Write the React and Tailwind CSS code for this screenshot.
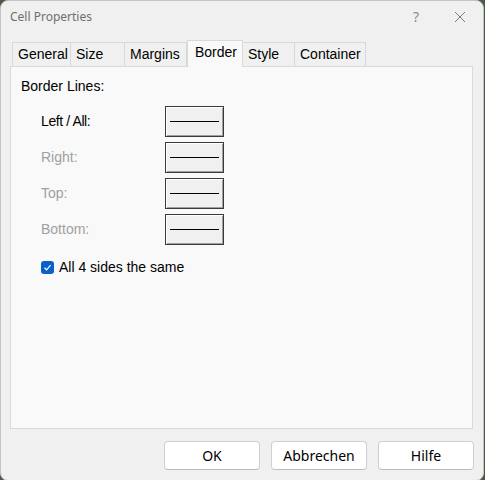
import React from 'react';

const tabs = [
  { label: 'General', w: 59 },
  { label: 'Size', w: 54 },
  { label: 'Margins', w: 62 },
  { label: 'Border', w: 56, active: true },
  { label: 'Style', w: 52 },
  { label: 'Container', w: 71 },
];

const rows = [
  { label: 'Left / All:', enabled: true },
  { label: 'Right:' },
  { label: 'Top:' },
  { label: 'Bottom:' },
];

const sans = { fontFamily: '"Liberation Sans", sans-serif' };

function LineButton() {
  return (
    <div className="h-[31px] w-[59px] border border-[#3a3a3a] bg-[#f0f0f0] shadow-[inset_1px_1px_0_#ffffff,inset_-1px_-1px_0_#a0a0a0] flex items-center justify-center">
      <div className="h-px w-[49px] bg-black" />
    </div>
  );
}

export default function App() {
  return (
    <div className="w-[485px] h-[480px] bg-[#4c5a44] overflow-hidden" style={{ fontFamily: '"Noto Sans", "Liberation Sans", sans-serif' }}>
      <div className="w-[484px] h-[481px] rounded-[8px] bg-[#f0f0f0] border border-[#c4c4c4] flex flex-col">
        {/* title bar */}
        <div className="h-[31px] flex items-center pl-[9px] text-[12px] text-[#6e6e6e]">
          <span className="flex-1">Cell Properties</span>
          <span className="w-[20px] text-center text-[14px] text-[#8a8a8a] mr-[28px]">?</span>
          <svg width="12" height="12" viewBox="0 0 12 12" className="mr-[17px]">
            <path d="M1 1L11 11M11 1L1 11" stroke="#7a7a7a" strokeWidth="1" />
          </svg>
        </div>

        {/* tabs */}
        <div className="pl-[11px] mt-[9px] flex items-end h-[25px] relative z-10" style={sans}>
          {tabs.map((t) =>
            t.active ? (
              <div
                key={t.label}
                style={{ width: t.w }}
                className="h-[27px] -mb-px bg-[#f9f9f9] border border-b-0 border-[#d9d9d9] pl-[7px] pt-[1px] text-[14px] text-black"
              >
                {t.label}
              </div>
            ) : (
              <div
                key={t.label}
                style={{ width: t.w }}
                className="h-[24px] bg-[#f0f0f0] border border-b-0 border-l-0 first:border-l border-[#d9d9d9] pl-[5px] pt-[1px] text-[14px] text-black"
              >
                {t.label}
              </div>
            )
          )}
        </div>

        {/* panel */}
        <div className="ml-[9px] mr-[10px] h-[363px] bg-[#f9f9f9] border border-[#d9d9d9] pt-[9px] pl-[10px]">
          <div className="text-[14px] text-black leading-[20px]" style={sans}>
            Border Lines:
          </div>
          <div className="mt-[10px] flex flex-col gap-[5px]">
            {rows.map((r) => (
              <div key={r.label} className="flex items-center h-[31px]">
                <span
                  className={`w-[144px] pl-[20px] text-[14px] ${r.enabled ? 'text-black tracking-[-0.4px]' : 'text-[#a0a0a0]'}`}
                  style={sans}
                >
                  {r.label}
                </span>
                <LineButton />
              </div>
            ))}
          </div>
          <div className="mt-[12px] ml-[20px] flex items-center gap-[5px]">
            <span className="w-[13px] h-[13px] rounded-[3px] bg-[#0a5fc8] flex items-center justify-center">
              <svg width="9" height="9" viewBox="0 0 9 9">
                <path d="M1.5 4.8L3.6 6.8L7.6 2.2" stroke="#ffffff" strokeWidth="1.2" fill="none" />
              </svg>
            </span>
            <span className="text-[14px] text-black" style={sans}>
              All 4 sides the same
            </span>
          </div>
        </div>

        {/* buttons */}
        <div className="mt-[12px] flex justify-end gap-[11px] pr-[9px]">
          {['OK', 'Abbrechen', 'Hilfe'].map((b) => (
            <button
              key={b}
              className="w-[96px] h-[29px] rounded-[4px] bg-white border border-[#d0d0d0] border-b-[#bdbdbd] text-[14px] text-black"
            >
              {b}
            </button>
          ))}
        </div>
      </div>
    </div>
  );
}
